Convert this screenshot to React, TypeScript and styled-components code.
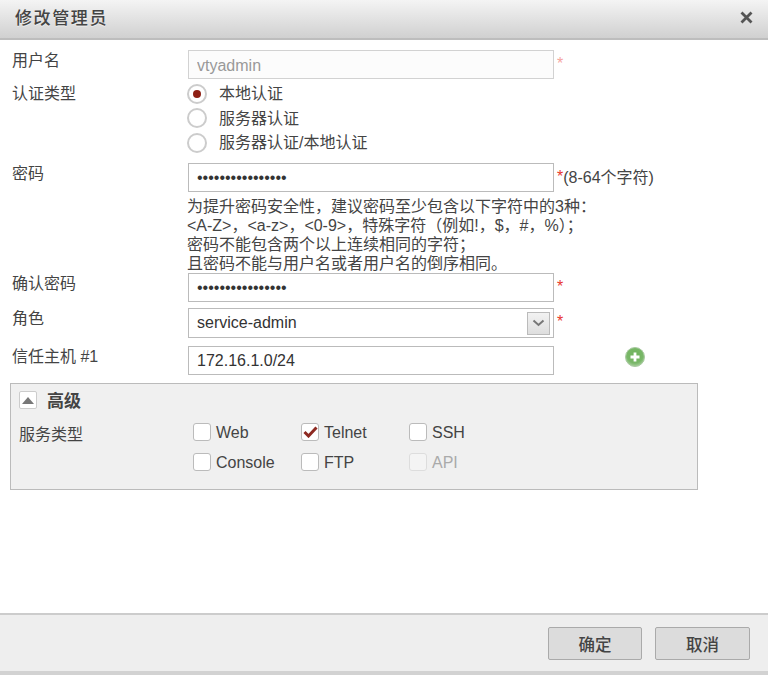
import React from "react";
import styled, { createGlobalStyle } from "styled-components";

const Global = createGlobalStyle`
  html, body { margin: 0; padding: 0; background: #fff; }
  * { box-sizing: border-box; }
`;
const Page = styled.div`
  width: 768px; height: 675px; display: flex; flex-direction: column; overflow: hidden;
  font-family: "Liberation Sans", "Noto Sans CJK SC", sans-serif; font-size: 16px; color: #444;
`;
const Header = styled.header`
  height: 40px; flex: none; display: flex; align-items: center; justify-content: space-between;
  padding: 0 15px 3px 15px; border-bottom: 2px solid #bdbdbd;
  background: linear-gradient(#f4f4f4, #d0d0d0);
`;
const Title = styled.h1`
  margin: 0 0 2px; font-size: 17px; font-weight: 500; letter-spacing: 1.6px; color: #444;
  text-shadow: 0 1px 0 #eee;
`;
const Body = styled.main`
  flex: 1; padding-top: 10px; min-height: 0;
`;
const Row = styled.div<{ $mt?: number; $h?: number }>`
  display: flex; align-items: flex-start; margin-top: ${(p) => p.$mt ?? 0}px;
  min-height: ${(p) => p.$h ?? 29}px;
`;
const Label = styled.div<{ $pt?: number }>`
  width: 188px; flex: none; padding: ${(p) => p.$pt ?? 1}px 0 0 12px; line-height: 20px;
`;
const Input = styled.input`
  width: 366px; height: 29px; flex: none; padding: 1px 8px 0; border: 1px solid #bbb; outline: 0;
  background: #fff; font: 16px "Liberation Sans", sans-serif; color: #333;
  &:disabled {
    padding-top: 3px; background: #fcfcfc; border-color: #d2d2d2; color: #999;
    -webkit-text-fill-color: #999; opacity: 1;
  }
`;
const Star = styled.span<{ $faded?: boolean }>`
  margin-left: 3px; line-height: 27px; color: ${(p) => (p.$faded ? "#f5a5a0" : "#e8382c")};
`;
const Note = styled.span`
  line-height: 29px; color: #444;
`;
const RadioGroup = styled.div`
  display: flex; flex-direction: column; margin: 0.5px 0 0 -1px;
`;
const RadioRow = styled.div`
  display: flex; align-items: center; height: 24.5px; gap: 12px; line-height: 20px;
`;
const RadioText = styled.span`
  padding-top: 1px;
`;
const RadioDot = styled.span<{ $on?: boolean }>`
  width: 20px; height: 20px; border-radius: 50%; border: 2px solid #ccc; background: #fff;
  display: flex; align-items: center; justify-content: center; flex: none;
  &::after { content: ""; width: 8px; height: 8px; border-radius: 50%; background: ${(p) => (p.$on ? "#8e1f14" : "transparent")}; }
`;
const Hint = styled.div`
  margin: 5px 0 0 187px; height: 76px; line-height: 19px; font-size: 16px; color: #444; white-space: nowrap;
`;
const Select = styled.div`
  width: 366px; height: 30px; border: 1px solid #bbb; background: #fff; display: flex; align-items: center;
  justify-content: space-between; padding: 0 3px 0 8px; color: #333;
`;
const SelectArrow = styled.span`
  width: 23px; height: 23px; border: 1px solid #bbb; background: linear-gradient(#f2f2f2, #dedede);
  display: flex; align-items: center; justify-content: center;
`;
const AddButton = styled.span`
  margin: 1px 0 0 71px; display: inline-flex;
`;
const Advanced = styled.section`
  width: 688px; height: 107px; margin: 8px 0 0 10px; background: #f0f0f0; border: 1px solid #bbb; padding: 6px 8px;
`;
const AdvancedHead = styled.div`
  display: flex; align-items: center; gap: 10px; height: 20px;
`;
const Toggle = styled.span`
  width: 18px; height: 18px; border: 1px solid #ccc; border-radius: 2px; background: #fff;
  display: flex; align-items: center; justify-content: center;
`;
const AdvancedTitle = styled.strong`
  font-size: 17px; font-weight: 700; color: #444; margin-bottom: 2px;
`;
const ServiceRow = styled.div`
  display: flex; margin-top: 13px;
`;
const ServiceLabel = styled.div`
  width: 174px; flex: none; line-height: 20px; margin-top: 2px;
`;
const ServiceGrid = styled.div`
  display: grid; grid-template-columns: repeat(3, 108px); grid-auto-rows: 30px;
`;
const CheckItem = styled.label<{ $off?: boolean }>`
  display: flex; align-items: flex-start; gap: 5px; line-height: 20px; color: ${(p) => (p.$off ? "#aaa" : "#444")};
`;
const Box = styled.span<{ $off?: boolean }>`
  width: 18px; height: 18px; flex: none; border: 1px solid ${(p) => (p.$off ? "#ddd" : "#bbb")}; border-radius: 3px;
  background: ${(p) => (p.$off ? "#f4f4f4" : "#fff")}; display: flex; align-items: center; justify-content: center;
`;
const Footer = styled.footer`
  height: 62px; flex: none; display: flex; justify-content: flex-end; gap: 13px; padding: 12px 18px 0 0;
  border-top: 2px solid #ccc; border-bottom: 4px solid #d2d2d2; background: #eee;
`;
const Btn = styled.button<{ $w: number }>`
  width: ${(p) => p.$w}px; height: 33px; border: 1px solid #aaa; border-radius: 2px; background: #dcdcdc;
  font: 500 16.5px "Liberation Sans", "Noto Sans CJK SC", sans-serif; color: #444; padding: 0;
`;

const CheckMark = () => (
  <svg width="15" height="12" viewBox="0 0 15 12">
    <path d="M1.5 6 L5.5 10 L13.5 1.5" fill="none" stroke="#8e2a22" strokeWidth="3" />
  </svg>
);

const Check = ({ label, on, off }: { label: string; on?: boolean; off?: boolean }) => (
  <CheckItem $off={off}>
    <Box $off={off}>{on && <CheckMark />}</Box>
    {label}
  </CheckItem>
);

export default function App() {
  return (
    <Page>
      <Global />
      <Header>
        <Title>修改管理员</Title>
        <svg width="13" height="13" viewBox="0 0 13 13">
          <path d="M1.5 1.5 L11.5 11.5 M11.5 1.5 L1.5 11.5" stroke="#555" strokeWidth="2.8" />
        </svg>
      </Header>
      <Body>
        <Row>
          <Label>用户名</Label>
          <Input disabled value="vtyadmin" readOnly />
          <Star $faded>*</Star>
        </Row>
        <Row $mt={2} $h={74}>
          <Label $pt={3}>认证类型</Label>
          <RadioGroup>
            <RadioRow><RadioDot $on /><RadioText>本地认证</RadioText></RadioRow>
            <RadioRow><RadioDot /><RadioText>服务器认证</RadioText></RadioRow>
            <RadioRow><RadioDot /><RadioText>服务器认证/本地认证</RadioText></RadioRow>
          </RadioGroup>
        </Row>
        <Row $mt={8}>
          <Label>密码</Label>
          <Input type="password" value="aaaaaaaaaaaaaaaa" readOnly />
          <Star>*</Star>
          <Note>(8-64个字符)</Note>
        </Row>
        <Hint>
          为提升密码安全性，建议密码至少包含以下字符中的3种：<br />
          &lt;A-Z&gt;，&lt;a-z&gt;，&lt;0-9&gt;，特殊字符（例如!，$，#，%）；<br />
          密码不能包含两个以上连续相同的字符；<br />
          且密码不能与用户名或者用户名的倒序相同。
        </Hint>
        <Row>
          <Label>确认密码</Label>
          <Input type="password" value="aaaaaaaaaaaaaaaa" readOnly />
          <Star>*</Star>
        </Row>
        <Row $mt={6} $h={30}>
          <Label>角色</Label>
          <Select>
            service-admin
            <SelectArrow>
              <svg width="13" height="8" viewBox="0 0 13 8">
                <path d="M1.5 1.5 L6.5 6 L11.5 1.5" fill="none" stroke="#777" strokeWidth="2" />
              </svg>
            </SelectArrow>
          </Select>
          <Star>*</Star>
        </Row>
        <Row $mt={8}>
          <Label>信任主机 #1</Label>
          <Input value="172.16.1.0/24" readOnly />
          <AddButton>
            <svg width="20" height="20" viewBox="0 0 20 20">
              <defs>
                <radialGradient id="addRing" cx="50%" cy="40%" r="60%">
                  <stop offset="0%" stopColor="#6fb35c" />
                  <stop offset="70%" stopColor="#79b768" />
                  <stop offset="100%" stopColor="#a9cf9e" />
                </radialGradient>
              </defs>
              <circle cx="10" cy="10" r="9.5" fill="url(#addRing)" stroke="#a8c9a0" />
              <path d="M10 5.5 V14.5 M5.5 10 H14.5" stroke="#fff" strokeWidth="2.8" />
            </svg>
          </AddButton>
        </Row>
        <Advanced>
          <AdvancedHead>
            <Toggle>
              <svg width="12" height="7" viewBox="0 0 12 7"><path d="M6 0 L12 7 H0 Z" fill="#777" /></svg>
            </Toggle>
            <AdvancedTitle>高级</AdvancedTitle>
          </AdvancedHead>
          <ServiceRow>
            <ServiceLabel>服务类型</ServiceLabel>
            <ServiceGrid>
              <Check label="Web" />
              <Check label="Telnet" on />
              <Check label="SSH" />
              <Check label="Console" />
              <Check label="FTP" />
              <Check label="API" off />
            </ServiceGrid>
          </ServiceRow>
        </Advanced>
      </Body>
      <Footer>
        <Btn $w={94}>确定</Btn>
        <Btn $w={95}>取消</Btn>
      </Footer>
    </Page>
  );
}
